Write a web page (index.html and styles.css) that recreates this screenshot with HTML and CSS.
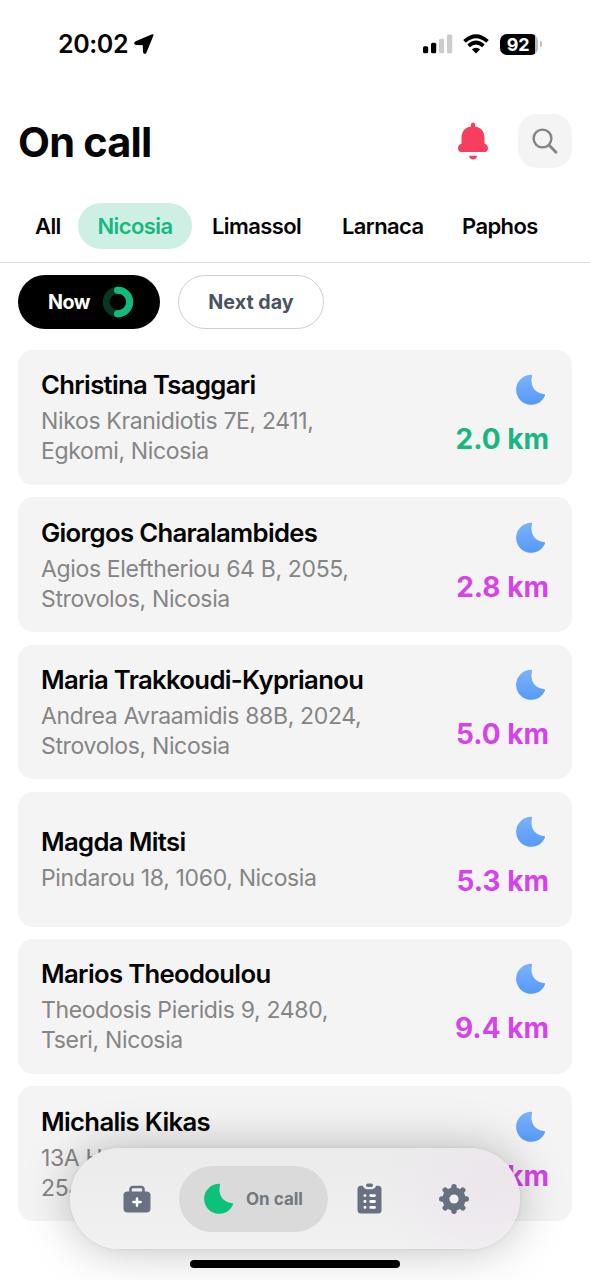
FILE: index.html
```html
<!DOCTYPE html>
<html lang="en">
<head>
<meta charset="utf-8">
<title>On call</title>
<link rel="stylesheet" href="styles.css">
</head>
<body>
<svg class="defs" width="0" height="0">
  <defs>
    <linearGradient id="sky" x1="0" y1="0" x2="0" y2="1"><stop offset="0" stop-color="#7db2f8"/><stop offset="1" stop-color="#559af8"/></linearGradient>
    <symbol id="moon" viewBox="0 0 30 30"><path d="M15.2.3C16 .2 16.3.9 16 1.7C13.8 10.8 18.5 18.7 27.6 19.6C28.9 19.7 29.3 20.2 28.8 21.4A15 15 0 1 1 15.2.3Z"/></symbol>
  </defs>
</svg>
<div class="screen">
  <div class="status">
    <div class="clock"><span class="time">20:02</span>
      <svg width="20" height="20" viewBox="0 0 20 20"><path d="M18.5 1.2L1.5 8.5Q.7 9.6 2 9.9L9.7 10.2L10 18Q10.400 19.400 11.500 18.400Z" fill="#000" stroke="#000" stroke-width="2" stroke-linejoin="round"/></svg>
    </div>
    <div class="signals">
      <svg width="30" height="20" viewBox="0 0 30 20"><rect x="0" y="12.300" width="5.200" height="7" rx="1.500"/><rect x="8" y="8.700" width="5.200" height="10.600" rx="1.500"/><g fill="#ccc"><rect x="16" y="4.700" width="5.200" height="14.600" rx="1.500"/><rect x="24" y=".5" width="5.200" height="18.800" rx="1.500"/></g></svg>
      <svg class="wifi" width="26" height="20" viewBox="0 0 26 20"><g fill="none" stroke="#000" stroke-width="3.800"><path d="M1.500 7.300Q13-3 24.500 7.300"/><path d="M5.600 11.900Q13 5.200 20.400 11.900"/></g><path d="M8.800 15.300Q13 12.100 17.200 15.300L13 19.500Z"/></svg>
      <div class="battery"><span class="level">92</span><i class="nub"></i></div>
    </div>
  </div>
  <header class="header">
    <h1 class="title">On call</h1>
    <svg class="bell" width="32" height="38" viewBox="0 0 32 38" fill="#f73e5f"><path d="M16 .6a2 2 0 0 1 2 2V4.500C24.800 5.600 27.500 10.300 27.500 16V21.400C29.300 22.100 31 23.500 31 26.200C31 28.900 29.300 30.100 27.200 30.100H4.800C2.700 30.100 1 28.900 1 26.200C1 23.500 2.700 22.100 4.500 21.400V16C4.500 10.300 7.200 5.600 14 4.500V2.600a2 2 0 0 1 2-2Z"/><path d="M12.200 33.800H20C19.800 36.300 18.400 37.600 16.100 37.600S12.400 36.300 12.200 33.800Z"/></svg>
    <button class="search" aria-label="Search"><svg width="28" height="28" viewBox="0 0 28 28" fill="none" stroke="#858585" stroke-linecap="round"><circle cx="11.500" cy="11.500" r="8.900" stroke-width="2.400"/><path d="M18.200 18.200L25 25.300" stroke-width="2.900"/></svg></button>
  </header>
  <nav class="tabs"><a class="tab t-all">All</a><a class="tab active">Nicosia</a><a class="tab t-lim">Limassol</a><a class="tab t-lar">Larnaca</a><a class="tab t-pap">Paphos</a></nav>
  <div class="filters">
    <button class="filter now"><span>Now</span><svg width="32" height="32" viewBox="0 0 32 32" fill="none" stroke-width="7"><circle cx="16" cy="16" r="11.700" stroke="#073623"/><path d="M15.200 4.300H16A11.700 11.700 0 0 1 16 27.700H15.200" stroke="#12ba7c" stroke-linecap="butt"/><path d="M15.500 4.300H16M15.500 27.700H16" stroke="#12ba7c" stroke-linecap="round"/></svg></button>
    <button class="filter next">Next day</button>
  </div>
  <main class="list">
    <article class="card"><div class="info"><h2 class="name">Christina Tsaggari</h2><p class="addr">Nikos Kranidiotis 7E, 2411,<br>Egkomi, Nicosia</p></div><div class="side"><svg class="moon"><use href="#moon"/></svg><span class="km near">2.0 km</span></div></article>
    <article class="card"><div class="info"><h2 class="name">Giorgos Charalambides</h2><p class="addr">Agios Eleftheriou 64 B, 2055,<br>Strovolos, Nicosia</p></div><div class="side"><svg class="moon"><use href="#moon"/></svg><span class="km">2.8 km</span></div></article>
    <article class="card"><div class="info"><h2 class="name">Maria Trakkoudi-Kyprianou</h2><p class="addr">Andrea Avraamidis 88B, 2024,<br>Strovolos, Nicosia</p></div><div class="side"><svg class="moon"><use href="#moon"/></svg><span class="km">5.0 km</span></div></article>
    <article class="card"><div class="info"><h2 class="name">Magda Mitsi</h2><p class="addr">Pindarou 18, 1060, Nicosia</p></div><div class="side"><svg class="moon"><use href="#moon"/></svg><span class="km">5.3 km</span></div></article>
    <article class="card"><div class="info"><h2 class="name">Marios Theodoulou</h2><p class="addr">Theodosis Pieridis 9, 2480,<br>Tseri, Nicosia</p></div><div class="side"><svg class="moon"><use href="#moon"/></svg><span class="km">9.4 km</span></div></article>
    <article class="card"><div class="info"><h2 class="name">Michalis Kikas</h2><p class="addr">13A H<br>254</p></div><div class="side"><svg class="moon"><use href="#moon"/></svg><span class="km">km</span></div></article>
  </main>
  <nav class="dock">
    <svg class="kit" width="28" height="28" viewBox="0 0 28 28"><path d="M7.500 7V4.500Q7.500 2 10 2H18Q20.500 2 20.500 4.500V7" fill="none" stroke="#697180" stroke-width="2.600"/><rect x=".5" y="6.500" width="27" height="21" rx="4" fill="#697180"/><path d="M14 13.500V20.700M10.400 17.100H17.600" stroke="#fff" stroke-width="2.500" stroke-linecap="round"/></svg>
    <div class="current"><svg class="moon green"><use href="#moon"/></svg><span>On call</span></div>
    <svg class="clip" width="25" height="31" viewBox="0 0 25 31"><path d="M4 2.700H5.800C6.500 5.200 8.500 6.300 12.500 6.300S18.500 5.200 19.200 2.700H21Q24.500 2.700 24.500 6.200V27Q24.500 30.500 21 30.500H4Q.5 30.500.5 27V6.200Q.5 2.700 4 2.700Z" fill="#697180"/><rect x="9" y=".5" width="7" height="3.400" rx="1.700" fill="#697180"/><path d="M7.900 12.600h.1M7.900 18.500h.1M7.900 24.400h.1M13.700 12.600H17.500M13.700 18.500H17.500M13.700 24.400H17.500" stroke="#fff" stroke-width="2.800" stroke-linecap="round"/></svg>
    <svg class="gear" width="30" height="30" viewBox="0 0 30 30"><g stroke="#697180" stroke-width="5.400" stroke-linecap="round"><path d="M15 2.700V27.300M2.700 15H27.300M6.200 6.200L23.800 23.800M23.800 6.200L6.200 23.800"/></g><circle cx="15" cy="15" r="11.600" fill="#697180"/><circle cx="15" cy="15" r="4.600" fill="#f1f0f1"/></svg>
  </nav>
  <div class="home"></div>
</div>
</body>
</html>
```
FILE: styles.css
```css
* { box-sizing: border-box; }
body { margin: 0; background: #fff; font-family: Inter, "Liberation Sans", sans-serif; color: #050505; }
h1, h2, p { margin: 0; }
button { font: inherit; border: 0; padding: 0; }
svg { display: block; flex: none; }
.defs { position: absolute; }
.screen { position: relative; width: 590px; height: 1280px; overflow: hidden; background: #fff; }

.status { height: 88px; padding: 0 48px 0 58px; display: flex; align-items: center; justify-content: space-between; }
.clock { display: flex; align-items: center; gap: 6px; }
.time { font-size: 25px; font-weight: 600; letter-spacing: -.4px; line-height: 30px; }
.signals { display: flex; align-items: center; }
.wifi { margin: 0 11px 0 10px; }
.battery { display: flex; align-items: center; gap: 2px; }
.level { width: 38px; height: 21px; border-radius: 7px; background: linear-gradient(90deg, #000 35px, #bbb 35px); color: #fff; font-size: 18px; line-height: 21px; font-weight: 700; text-align: center; padding-right: 2px; letter-spacing: -.3px; }
.nub { width: 2px; height: 6px; border-radius: 0 3px 3px 0; background: #bbb; }

.header { height: 106px; padding: 0 18px; display: flex; align-items: center; }
.title { font-size: 41.500px; line-height: 50px; font-weight: 700; letter-spacing: -.8px; flex: 1; padding-top: 1px; }
.bell { margin-right: 29px; }
.search { width: 54px; height: 54px; border-radius: 19px; background: #f4f4f4; display: grid; place-items: center; }

.tabs { height: 69px; padding: 9px 0 13px 35px; display: flex; align-items: center; border-bottom: 1px solid #dedede; font-size: 22px; font-weight: 600; letter-spacing: -.6px; line-height: 46px; white-space: nowrap; }
.t-all { width: 43px; }
.active { width: 114px; height: 46px; border-radius: 23px; background: #cef0e4; color: #17b880; text-align: center; margin-right: 20px; }
.t-lim { width: 130px; }
.t-lar { width: 120px; }

.filters { height: 87px; padding: 12px 18px 0; display: flex; gap: 18px; }
.filter { height: 54px; border-radius: 27px; font-size: 19.700px; font-weight: 650; display: flex; align-items: center; justify-content: center; }
.now { width: 142px; background: #000; color: #fff; gap: 12px; padding-left: 4px; letter-spacing: -.5px; }
.next { width: 146px; background: #fff; color: #4b5260; border: 1.500px solid #cfcfd2; }

.list { display: flex; flex-direction: column; gap: 12.600px; padding: 0 18px; }
.card { height: 134.700px; flex: none; border-radius: 15px; background: #f4f4f4; display: flex; justify-content: space-between; align-items: center; padding: 0 23px; white-space: nowrap; }
.name { font-size: 25.700px; font-weight: 600; line-height: 34px; letter-spacing: -.67px; margin-bottom: 4px; }
.addr { font-size: 23px; line-height: 30px; color: #858585; letter-spacing: -.35px; }
.side { display: flex; flex-direction: column; align-items: flex-end; gap: 17px; padding-bottom: 4px; }
.moon { width: 30px; height: 31px; fill: url(#sky); margin-right: 3px; }
.km { font-size: 28px; line-height: 34px; font-weight: 650; color: #d444e8; }
.near { color: #19b681; }

.dock { position: absolute; left: 70px; top: 1148px; width: 450px; height: 101px; border-radius: 51px; background: radial-gradient(ellipse 110px 85px at 420px 45px, rgba(236,222,238,.5), rgba(240,240,240,0)), linear-gradient(#ebebeb, #f1f1f1); box-shadow: 0 0 48px rgba(0,0,0,.26), 0 0 5px rgba(0,0,0,.06); display: flex; align-items: center; padding-left: 53px; }
.current { width: 149px; height: 66px; border-radius: 33px; background: #dadada; margin: 0 29px 0 28px; display: flex; align-items: center; justify-content: center; gap: 12px; color: #737780; font-size: 17px; font-weight: 700; }
.green { fill: #0cc27b; margin: 0; }
.clip { margin-right: 57px; }
.home { position: absolute; left: 190px; top: 1260px; width: 210px; height: 8px; border-radius: 4px; background: #000; }
```
